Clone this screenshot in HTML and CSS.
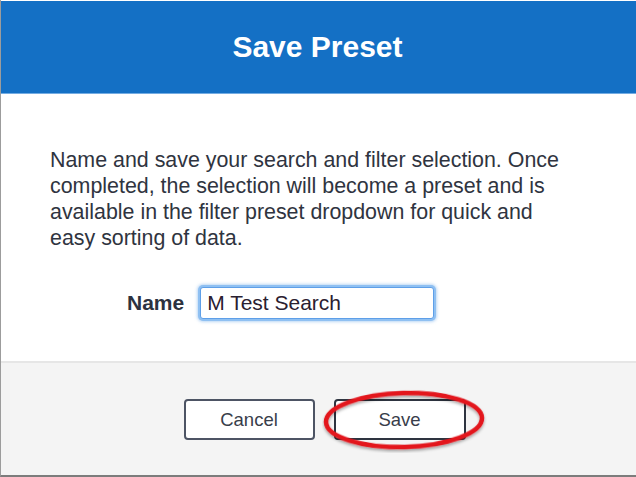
FILE: index.html
```html
<!DOCTYPE html>
<html>
<head>
<meta charset="utf-8">
<link rel="stylesheet" href="styles.css">
</head>
<body>
<div class="dialog">
  <div class="header"><h1 class="title">Save Preset</h1></div>
  <div class="content">
    <p class="desc">Name and save your search and filter selection. Once completed, the selection will become a preset and is available in the filter preset dropdown for quick and easy sorting of data.</p>
    <div class="name-row">
      <label class="name-label" for="name">Name</label>
      <input class="name-input" id="name" type="text" value="M Test Search">
    </div>
  </div>
  <div class="footer">
    <button class="btn">Cancel</button>
    <div class="save-wrap">
      <button class="btn btn-save">Save</button>
      <svg class="circle" width="166" height="64" viewBox="0 0 166 64">
        <defs>
          <filter id="sh" x="-10%" y="-20%" width="120%" height="140%">
            <feDropShadow dx="0" dy="2" stdDeviation="1.5" flood-color="#000" flood-opacity="0.35"/>
          </filter>
        </defs>
        <ellipse cx="82" cy="31" rx="78" ry="27" fill="none" stroke="#e3131b" stroke-width="4.5" filter="url(#sh)" transform="rotate(-1.5 82 31)"/>
      </svg>
    </div>
  </div>
</div>
</body>
</html>
```

FILE: styles.css
```css
html, body {
  margin: 0;
  padding: 0;
  background: #ffffff;
}
body {
  font-family: "Liberation Sans", Arial, sans-serif;
  color: #2f3542;
}
.dialog {
  width: 636px;
  height: 477px;
  box-sizing: border-box;
  border-left: 1px solid #9c9c9c;
  border-bottom: 2px solid #7c7c7c;
  display: flex;
  flex-direction: column;
  padding-top: 1px;
}
.header {
  height: 92px;
  background: #1470c5;
  border-bottom: 1px solid #74ace2;
  display: flex;
  align-items: center;
  justify-content: center;
}
.title {
  margin: 0;
  color: #ffffff;
  font-size: 30px;
  font-weight: bold;
  padding-right: 2px;
}
.content {
  flex: 1;
  padding: 53px 64px 0 49px;
}
.desc {
  margin: 0;
  font-size: 21.4px;
  line-height: 26px;
  color: #2f3440;
}
.name-row {
  display: flex;
  align-items: center;
  gap: 16px;
  margin-top: 36px;
  padding-left: 77px;
}
.name-label {
  font-size: 21px;
  font-weight: bold;
  color: #2c3240;
}
.name-input {
  width: 234px;
  height: 32px;
  box-sizing: border-box;
  border: 1px solid #5e9fe8;
  border-radius: 3px;
  box-shadow: 0 0 0 2px #8fc0f2, 0 0 3px 3px rgba(120, 175, 235, 0.5);
  padding: 0 6px;
  font-family: "Liberation Sans", Arial, sans-serif;
  font-size: 21px;
  color: #2a2030;
  outline: none;
  background: #ffffff;
}
.footer {
  height: 114px;
  box-sizing: border-box;
  background: #f4f4f4;
  border-top: 2px solid #e6e6e6;
  display: flex;
  justify-content: center;
  align-items: flex-start;
  gap: 19px;
  padding: 36px 0 0 12px;
}
.btn {
  width: 131px;
  height: 41px;
  box-sizing: border-box;
  background: #ffffff;
  border: 2px solid #4d5464;
  border-radius: 4px;
  font-family: "Liberation Sans", Arial, sans-serif;
  font-size: 18.5px;
  color: #383d4a;
  padding: 0;
}
.save-wrap {
  position: relative;
  width: 132px;
  height: 41px;
}
.btn-save {
  width: 132px;
  border-color: #2e3440;
}
.circle {
  position: absolute;
  left: -12px;
  top: -10px;
  pointer-events: none;
}
```
